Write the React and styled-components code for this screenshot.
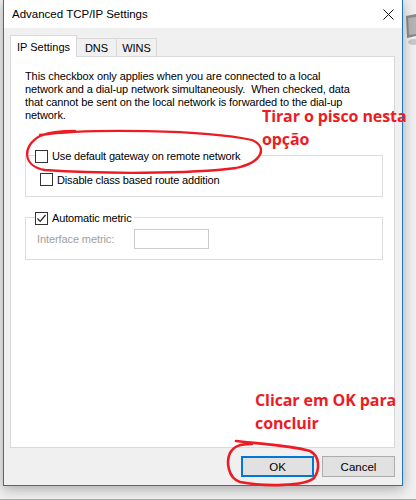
import React from 'react';
import styled, { createGlobalStyle } from 'styled-components';

const GlobalStyle = createGlobalStyle`
  html, body {
    margin: 0;
    padding: 0;
    background: #f0f0f0;
  }
  body {
    font-family: "Liberation Sans", Arial, sans-serif;
    font-size: 11px;
    color: #000;
  }
`;

const Desktop = styled.div`
  position: relative;
  width: 416px;
  height: 500px;
  box-sizing: border-box;
  overflow: hidden;
  background: #f0f0f0;
  border-bottom: 1px solid #a9a9a9;
`;

const Window = styled.div`
  margin-left: 3px;
  width: 400px;
  height: 486px;
  box-sizing: border-box;
  border: 1px solid #2272c3;
  border-top: none;
  background: #f0f0f0;
  box-shadow: 0 3px 12px rgba(0, 0, 0, 0.3);
  display: flex;
  flex-direction: column;
  position: relative;
`;

const TitleBar = styled.div`
  height: 28px;
  flex: none;
  background: #fff;
  display: flex;
  align-items: center;
  justify-content: space-between;
  padding-left: 8px;
  padding-right: 8px;
  font-size: 11.5px;
`;

const Body = styled.div`
  flex: 1;
  display: flex;
  flex-direction: column;
  padding: 7px 7px 8px 6px;
`;

const TabRow = styled.div`
  display: flex;
  align-items: flex-end;
  height: 21px;
  position: relative;
  z-index: 1;
`;

const Tab = styled.div`
  box-sizing: border-box;
  width: ${p => p.$width}px;
  height: ${p => (p.$active ? 22 : 18)}px;
  margin-bottom: ${p => (p.$active ? -1 : 0)}px;
  margin-left: ${p => (p.$first ? 0 : -1)}px;
  background: ${p => (p.$active ? '#fff' : '#f0f0f0')};
  border: 1px solid #d9d9d9;
  border-bottom: none;
  display: flex;
  align-items: center;
  justify-content: center;
  font-size: 11px;
  padding-top: ${p => (p.$active ? 0 : 1)}px;
`;

const Panel = styled.div`
  box-sizing: border-box;
  height: 392px;
  background: #fff;
  border: 1px solid #d9d9d9;
  padding: 13px 11px 0 14px;
`;

const Info = styled.p`
  margin: 0;
  line-height: 13px;
  font-size: 11px;
  letter-spacing: -0.1px;
`;

const Group = styled.fieldset`
  margin: ${p => p.$top}px 0 0 0;
  border: 1px solid #dcdcdc;
  padding: 0 9px ${p => p.$bottom}px 9px;
  min-width: 0;
`;

const Legend = styled.legend`
  padding: 3px ${p => p.$tail}px 0 0;
  margin: 0;
  line-height: 13px;
`;

const CheckRow = styled.label`
  display: flex;
  align-items: center;
  gap: 4px;
  margin-left: ${p => p.$indent || 0}px;
  margin-top: ${p => p.$top || 0}px;
  height: 13px;
  white-space: nowrap;
  letter-spacing: -0.15px;
`;

const Box = styled.span`
  box-sizing: border-box;
  width: 13px;
  height: 13px;
  flex: none;
  border: 1px solid #333;
  background: #fff;
  display: flex;
  align-items: center;
  justify-content: center;
`;

const MetricRow = styled.div`
  display: flex;
  align-items: center;
  margin: 4px 0 0 2px;
  height: 20px;
`;

const MetricLabel = styled.span`
  width: 97px;
  color: #a0a0a0;
  letter-spacing: -0.1px;
`;

const MetricInput = styled.div`
  box-sizing: border-box;
  width: 75px;
  height: 20px;
  border: 1px solid #cccccc;
  background: #fff;
`;

const Buttons = styled.div`
  display: flex;
  justify-content: flex-end;
  gap: 8px;
  margin-top: 8px;
`;

const Button = styled.div`
  box-sizing: border-box;
  width: 73px;
  height: 21px;
  background: #e1e1e1;
  border: ${p => (p.$default ? '2px solid #0078d7' : '1px solid #adadad')};
  display: flex;
  align-items: center;
  justify-content: center;
  font-size: 11.5px;
`;

const Note = styled.div`
  position: absolute;
  left: ${p => p.$x}px;
  top: ${p => p.$y}px;
  color: #ec1c24;
  font-family: "Open Sans", "Noto Sans", sans-serif;
  font-weight: 700;
  font-size: 16px;
  line-height: 22.5px;
  letter-spacing: -0.1px;
  white-space: nowrap;
`;

const Scribble = styled.svg`
  position: absolute;
  left: 0;
  top: 0;
  pointer-events: none;
`;

const DesktopIcon = styled.svg`
  position: absolute;
  left: 405px;
  top: 14px;
`;

function CheckBox({ checked }) {
  return (
    <Box>
      {checked && (
        <svg width="11" height="11" viewBox="0 0 11 11">
          <polyline points="1.5,5.5 4.2,8.3 9.5,2" fill="none" stroke="#222" strokeWidth="1.2" />
        </svg>
      )}
    </Box>
  );
}

export default function App() {
  return (
    <>
      <GlobalStyle />
      <Desktop>
        <DesktopIcon width="11" height="34" viewBox="0 0 11 34">
          <path d="M1 2 L11 0 L11 22 L2 24 Z" fill="#8a8a8a" />
          <path d="M3 4 L11 3 L11 20 L4 21 Z" fill="#b5b5b5" />
          <ellipse cx="9" cy="28" rx="6" ry="3" fill="#c8c8c8" />
        </DesktopIcon>
        <Window>
          <TitleBar>
            <span>Advanced TCP/IP Settings</span>
            <svg width="11" height="11" viewBox="0 0 11 11">
              <path d="M0.5 0.5 L10.5 10.5 M10.5 0.5 L0.5 10.5" stroke="#111" strokeWidth="1" />
            </svg>
          </TitleBar>
          <Body>
            <TabRow>
              <Tab $active $first $width={67}>IP Settings</Tab>
              <Tab $width={41}>DNS</Tab>
              <Tab $width={41}>WINS</Tab>
            </TabRow>
            <Panel>
              <Info>
                This checkbox only applies when you are connected to a local<br />
                network and a dial-up network simultaneously.&nbsp; When checked, data<br />
                that cannot be sent on the local network is forwarded to the dial-up<br />
                network.
              </Info>
              <Group $top={25} $bottom={10}>
                <Legend $tail={19}>
                  <CheckRow>
                    <CheckBox />
                    <span>Use default gateway on remote network</span>
                  </CheckRow>
                </Legend>
                <CheckRow $indent={5} $top={10}>
                  <CheckBox />
                  <span>Disable class based route addition</span>
                </CheckRow>
              </Group>
              <Group $top={12} $bottom={10}>
                <Legend $tail={2}>
                  <CheckRow>
                    <CheckBox checked />
                    <span>Automatic metric</span>
                  </CheckRow>
                </Legend>
                <MetricRow>
                  <MetricLabel>Interface metric:</MetricLabel>
                  <MetricInput />
                </MetricRow>
              </Group>
            </Panel>
            <Buttons>
              <Button $default>OK</Button>
              <Button>Cancel</Button>
            </Buttons>
          </Body>
        </Window>

        <Note $x={262} $y={105}>
          Tirar o pisco nesta
          <br />
          opção
        </Note>
        <Note $x={255} $y={389}>
          Clicar em OK para
          <br />
          concluir
        </Note>

        <Scribble width="416" height="500" viewBox="0 0 416 500">
          <path
            d="M40 135 C90 128, 205 130, 252 140 C268 147, 263 162, 236 168 C190 174, 100 174, 45 170 C22 166, 22 146, 40 136 C50 132, 62 131, 75 131"
            fill="none"
            stroke="#ec1c24"
            strokeWidth="2.3"
            strokeLinecap="round"
          />
          <path
            d="M236 441 C250 443, 290 445, 310 451 C320 456, 320 470, 314 478 C305 486, 265 487, 240 482 C228 478, 226 462, 230 453 C234 446, 240 444, 252 444"
            fill="none"
            stroke="#ec1c24"
            strokeWidth="2.6"
            strokeLinecap="round"
          />
        </Scribble>
      </Desktop>
    </>
  );
}
